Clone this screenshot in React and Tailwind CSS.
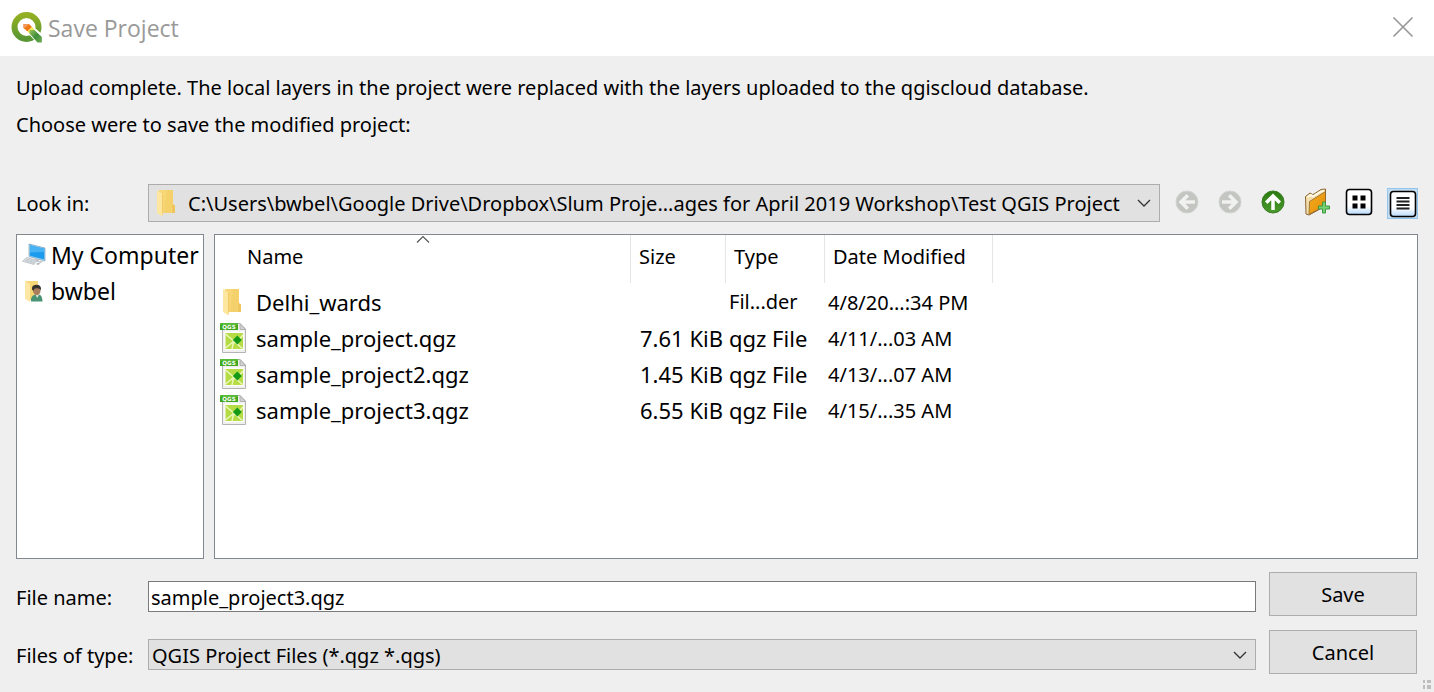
import React, { useState } from "react";

function QgisLogo() {
  return (
    <svg viewBox="0 0 32 32" className="size-8 shrink-0" aria-hidden="true">
      <defs>
        <linearGradient id="ring" x1="0" y1="0" x2="0" y2="1">
          <stop offset="0" stopColor="#93b023" />
          <stop offset="1" stopColor="#589632" />
        </linearGradient>
        <linearGradient id="tail" x1="0" y1="0" x2="1" y2="1">
          <stop offset="0" stopColor="#9cc45a" />
          <stop offset="0.5" stopColor="#3f8f3c" />
          <stop offset="1" stopColor="#6cab4e" />
        </linearGradient>
      </defs>
      <circle cx="15.5" cy="15" r="12" fill="none" stroke="url(#ring)" strokeWidth="6" />
      <path d="M18 22.5 L24 16 L33 24 V32 H27 Z" fill="#fff" />
      <path d="M12.5 12 H18 L21 15 L16.5 19.5 L12.5 16 Z" fill="#ee7913" />
      <path d="M12.5 12 H18 L14.5 15.5 L12.5 16 Z" fill="#f29a5c" />
      <path d="M16.5 19.5 L21 15 L23.5 17.5 L18.5 21.5 Z" fill="#f6e64c" />
      <path d="M18.5 21.5 V18 H23.5 L30.8 25 V30.5 H26.5 Z" fill="url(#tail)" />
    </svg>
  );
}

function FolderIcon({ className }) {
  return (
    <svg viewBox="0 0 22 28" className={className} aria-hidden="true">
      <path d="M4 1 H18 V16 H20 V24 H5 Z" fill="#f7d675" />
      <path d="M12 1 H18 V16 L16 20 V24 H9 Z" fill="#f3ce68" opacity="0.7" />
      <path d="M17 17 L18.5 15 L20 17 V24 H17 Z" fill="#edc55c" />
      <path d="M2 1 L7.5 5 V27.5 L2 24 Z" fill="#fde6a0" />
      <path d="M7 5 L8 5.5 V24 L7 27 Z" fill="#f2cb66" />
    </svg>
  );
}

function ComputerIcon() {
  return (
    <svg viewBox="0 0 24 24" className="size-6 shrink-0" aria-hidden="true">
      <path d="M7 1 L23 5 V18 L7 13.5 Z" fill="#9fd6f7" stroke="#6b91aa" strokeWidth="0.6" />
      <path d="M8 2.3 L22.2 5.8 V16.6 L8 12.7 Z" fill="#1c9bee" />
      <path d="M8 2.3 L22.2 5.8 V9 L8 9.5 Z" fill="#48b3f4" />
      <path d="M13 15 L17 16 V18 L22 17.5 L19 20 L13.5 18.5 Z" fill="#c2c8ce" />
      <path d="M4.5 14.5 L15.5 17.3 L12 21.5 L0.5 18.2 Z" fill="#dfe3e6" stroke="#a3abb2" strokeWidth="0.6" />
      <path d="M4 16 L13.5 18.5 M2.7 17.3 L12.5 20 M7 15.5 L4.5 19 M10 16.4 L8 20 M13 17 L10.5 20.7" stroke="#aeb6bd" strokeWidth="0.5" />
      <path d="M15.5 20 L18.5 20.6 L16.5 21.8 L14 21.3 Z" fill="#a3abb2" />
    </svg>
  );
}

function UserFolderIcon() {
  return (
    <svg viewBox="0 0 24 24" className="size-6 shrink-0" aria-hidden="true">
      <path d="M4 2 H16 V21 H5 Z" fill="#f7d675" />
      <path d="M3 2 L8 5 V23 L3 20 Z" fill="#fde7a4" />
      <path d="M9 22.5 Q8.5 16.5 13.5 15.5 H17 Q20.5 16.5 20.5 22.5 Z" fill="#4a9274" />
      <path d="M13.5 15.5 L15.2 19 L17 15.5 Z" fill="#e7ece8" />
      <ellipse cx="14.8" cy="11.6" rx="3.8" ry="4.6" fill="#a87d5c" />
      <path d="M10 10.5 Q9.5 6 14 5.7 Q19.5 5.5 19 11 Q17.5 8.8 14 9.2 Q11.5 9.5 11.3 12 Z" fill="#35312e" />
    </svg>
  );
}

function QgsFileIcon() {
  return (
    <svg viewBox="0 0 28 34" className="h-[34px] w-7 shrink-0" aria-hidden="true">
      <path d="M2.5 2.5 H20 L25.5 8 V31.5 H2.5 Z" fill="#f0f0f0" stroke="#b4b4b4" />
      <path d="M20 2.5 V8.5 H25.5 Z" fill="#d0d0d0" stroke="#a8a8a8" strokeWidth="0.8" />
      <rect x="4.5" y="10.5" width="19" height="18.5" fill="#fff" />
      <rect x="5.5" y="12" width="17.5" height="16" fill="#b5dc45" />
      <path d="M5.5 13 L22.5 27.5 M5.5 27 L13 21 L16 22 L23 14 M12 28 L13.5 21" stroke="#eef8bd" strokeWidth="1.4" fill="none" />
      <path d="M17.3 14.5 L21.8 19 L17.3 23.5 L12.8 19 Z" fill="#149a16" />
      <rect x="0" y="2" width="18" height="7" fill="#3ea71c" />
      <rect x="0" y="2" width="18" height="2" fill="#57ba37" />
      <text x="9" y="7.8" textAnchor="middle" fontFamily="DejaVu Sans" fontWeight="bold" fontSize="5.6" fill="#fff">
        QGS
      </text>
    </svg>
  );
}

function ArrowIcon({ turn, active }) {
  return (
    <svg viewBox="0 0 24 24" className="size-6" aria-hidden="true">
      <defs>
        <linearGradient id="go" x1="0" y1="0" x2="0" y2="1">
          <stop offset="0" stopColor="#2b7a10" />
          <stop offset="1" stopColor="#4a9a2b" />
        </linearGradient>
      </defs>
      <circle cx="12" cy="12" r="11" fill={active ? "url(#go)" : "#c3c6c0"} stroke={active ? "#3b7d25" : "#d3d4d1"} />
      <g transform={`rotate(${turn} 12 12)`}>
        <path d="M12 20 V7 M5.2 12.8 L12 6 L18.8 12.8" fill="none" stroke={active ? "#fff" : "#f1f1f0"} strokeWidth="3.5" />
      </g>
    </svg>
  );
}

function NewFolderIcon() {
  return (
    <svg viewBox="0 0 26 28" className="h-7 w-[26px]" aria-hidden="true">
      <defs>
        <linearGradient id="amber" x1="0" y1="0" x2="1" y2="1">
          <stop offset="0" stopColor="#f7ae22" />
          <stop offset="1" stopColor="#e08c06" />
        </linearGradient>
      </defs>
      <path d="M2 26 L1.5 8.5 L6 5 L8.5 6.5 L10 6 L17 1.5 L21.5 1 V18 L5 27 Z" fill="#f4dfac" stroke="#8a6330" strokeWidth="1" strokeLinejoin="round" />
      <path d="M3.5 9 L7 7 L9 8.5 L16 4 L20 2.5" stroke="#fffbe9" strokeWidth="1.6" fill="none" />
      <path d="M5.5 13.5 L21.5 3.5 V17.5 L5 26.5 Z" fill="url(#amber)" stroke="#8a6330" strokeWidth="0.8" strokeLinejoin="round" />
      <path d="M18.5 14 H21.5 V18 H25.5 V21 H21.5 V25 H18.5 V21 H14.5 V18 H18.5 Z" fill="#73cf72" stroke="#3f9741" strokeWidth="1" />
    </svg>
  );
}

function ViewIcon({ kind }) {
  return (
    <svg viewBox="0 0 28 28" className="size-7" aria-hidden="true">
      <defs>
        <linearGradient id="face" x1="0" y1="0" x2="0" y2="1">
          <stop offset="0.65" stopColor="#fff" />
          <stop offset="1" stopColor="#b9dafb" />
        </linearGradient>
      </defs>
      <rect x="1.5" y="1.5" width="25" height="25" rx="3" fill="url(#face)" stroke="#000" strokeWidth="1.6" />
      {kind === "grid" ? (
        <path d="M7.5 7.5 h5 v5 h-5 Z M15.5 7.5 h5 v5 h-5 Z M7.5 15.5 h5 v5 h-5 Z M15.5 15.5 h5 v5 h-5 Z" fill="#000" />
      ) : (
        <path d="M7.5 8 h13 M7.5 11.5 h13 M7.5 15 h13 M7.5 18.5 h13" stroke="#222" strokeWidth="1.9" />
      )}
    </svg>
  );
}

function Chevron() {
  return (
    <svg viewBox="0 0 14 8" className="pointer-events-none absolute right-[9px] top-1/2 h-2 w-3.5 -translate-y-1/2" aria-hidden="true">
      <path d="M1 1 L7 7 L13 1" fill="none" stroke="#333" strokeWidth="1.3" />
    </svg>
  );
}

const files = [
  { name: "Delhi_wards", size: "", type: "Fil...der", date: "4/8/20...:34 PM", folder: true },
  { name: "sample_project.qgz", size: "7.61 KiB", type: "qgz File", date: "4/11/...03 AM" },
  { name: "sample_project2.qgz", size: "1.45 KiB", type: "qgz File", date: "4/13/...07 AM" },
  { name: "sample_project3.qgz", size: "6.55 KiB", type: "qgz File", date: "4/15/...35 AM" },
];

export default function App() {
  const [name, setName] = useState("sample_project3.qgz");
  const [view, setView] = useState("list");
  const pushButton = "ml-[13px] mr-px h-11 w-[148px] shrink-0 border border-[#adadad] bg-[#e1e1e1] pt-0.5";
  const cell = "overflow-hidden whitespace-nowrap p-0";
  const head = "whitespace-nowrap border-r border-[#e5e5e5] pb-1 pl-2 text-left font-normal";

  return (
    <div className="relative flex min-h-screen flex-col bg-[#efefef] font-['Noto_Sans',sans-serif] text-[20px] leading-7 text-black">
      <header className="flex h-14 items-center justify-between bg-white pl-[11px] pr-[19px]">
        <div className="flex items-center gap-[5px]">
          <QgisLogo />
          <h1 className="font-['Open_Sans',sans-serif] text-[23px] text-[#999]">Save Project</h1>
        </div>
        <button type="button" aria-label="Close" className="mb-0.5 flex size-6 items-center justify-center">
          <svg viewBox="0 0 22 22" className="size-[22px]" aria-hidden="true">
            <path d="M1.5 1.5 L20.5 20.5 M20.5 1.5 L1.5 20.5" stroke="#999" strokeWidth="1.7" />
          </svg>
        </button>
      </header>

      <main className="flex flex-1 flex-col px-4 pb-[18px] pt-[18px]">
        <p>Upload complete. The local layers in the project were replaced with the layers uploaded to the qgiscloud database.</p>
        <p className="mt-[9px]">Choose were to save the modified project:</p>

        <div className="mt-[45px] flex items-center">
          <label htmlFor="look-in" className="w-[132px] shrink-0 pt-0.5">Look in:</label>
          <div className="relative min-w-0 flex-1">
            <FolderIcon className="pointer-events-none absolute left-[7px] top-[5px] h-7 w-[22px]" />
            <select id="look-in" className="h-[38px] w-full appearance-none truncate border border-[#adadad] bg-[#e1e1e1] pl-[39px] pr-7 pt-0.5">
              <option>{"C:\\Users\\bwbel\\Google Drive\\Dropbox\\Slum Proje...ages for April 2019 Workshop\\Test QGIS Project"}</option>
            </select>
            <Chevron />
          </div>
          <div className="ml-[15px] flex shrink-0 items-center gap-[19px] pb-0.5">
            <button type="button" aria-label="Back" disabled><ArrowIcon turn={-90} /></button>
            <button type="button" aria-label="Forward" disabled><ArrowIcon turn={90} /></button>
            <button type="button" aria-label="Parent folder"><ArrowIcon turn={0} active /></button>
            <button type="button" aria-label="New folder"><NewFolderIcon /></button>
          </div>
          <div className="ml-[15px] flex shrink-0 items-center gap-[14px]">
            <button type="button" aria-label="Icon view" onClick={() => setView("grid")} className="pb-0.5"><ViewIcon kind="grid" /></button>
            <button
              type="button"
              aria-label="Detail view"
              aria-pressed={view === "list"}
              onClick={() => setView("list")}
              className="flex size-[31px] items-end justify-end border border-[#92c6ef] bg-[#c5dcee]"
            >
              <ViewIcon kind="list" />
            </button>
          </div>
        </div>

        <div className="mt-3 flex min-h-[325px] flex-1 gap-[10px]">
          <nav className="w-[188px] shrink-0 overflow-hidden border border-[#828790] bg-white pl-[5px] pt-0.5 text-[23px]">
            <ul>
              <li className="flex h-9 items-center gap-[5px] whitespace-nowrap"><ComputerIcon />My Computer</li>
              <li className="flex h-9 items-center gap-[5px] whitespace-nowrap"><UserFolderIcon />bwbel</li>
            </ul>
          </nav>
          <div className="min-w-0 flex-1 overflow-hidden border border-[#828790] bg-white">
            <table className="w-full table-fixed border-separate border-spacing-0">
              <colgroup>
                <col className="w-[416px]" />
                <col className="w-[95px]" />
                <col className="w-[99px]" />
                <col className="w-[168px]" />
                <col />
              </colgroup>
              <thead>
                <tr className="h-12">
                  <th scope="col" className="relative border-r border-[#e5e5e5] pb-1 pl-8 text-left font-normal">
                    <svg viewBox="0 0 14 8" className="absolute left-1/2 top-0 h-2 w-3.5 -translate-x-1/2" aria-hidden="true">
                      <path d="M1 7.5 L7 1.5 L13 7.5" fill="none" stroke="#555" strokeWidth="1.2" />
                    </svg>
                    Name
                  </th>
                  <th scope="col" className={head}>Size</th>
                  <th scope="col" className={head}>Type</th>
                  <th scope="col" className={head}>Date Modified</th>
                  <td />
                </tr>
              </thead>
              <tbody className="before:block before:h-px">
                {files.map((f) => (
                  <tr key={f.name} className="h-9">
                    <td className={cell + " pl-[5px]"}>
                      <div className="flex items-center gap-2 text-[22px]">
                        {f.folder ? <FolderIcon className="mr-1 h-7 w-6 shrink-0" /> : <QgsFileIcon />}
                        {f.name}
                      </div>
                    </td>
                    <td className={cell + " pr-[3px] text-right text-[22px]"}>{f.size}</td>
                    <td className={cell + " pl-[3px]" + (f.folder ? "" : " text-[22px]")}>{f.type}</td>
                    <td className={cell + " pl-[3px] pt-0.5"}>{f.date}</td>
                    <td />
                  </tr>
                ))}
              </tbody>
            </table>
          </div>
        </div>

        <div className="mt-[13px] flex items-center">
          <label htmlFor="file-name" className="w-[132px] shrink-0 pt-2">File name:</label>
          <input
            id="file-name"
            type="text"
            value={name}
            onChange={(e) => setName(e.target.value)}
            className="mt-[5px] h-[31px] min-w-0 flex-1 border border-[#7a7a7a] bg-white px-0.5 pt-0.5"
          />
          <button type="button" className={pushButton}>Save</button>
        </div>
        <div className="mt-[14px] flex items-center">
          <label htmlFor="file-type" className="w-[132px] shrink-0 pt-2">Files of type:</label>
          <div className="relative mt-[5px] flex min-w-0 flex-1">
            <select id="file-type" className="h-[31px] w-full appearance-none border border-[#adadad] bg-[#e1e1e1] pl-[3px] pr-7 pt-0.5">
              <option>QGIS Project Files (*.qgz *.qgs)</option>
            </select>
            <Chevron />
          </div>
          <button type="button" className={pushButton}>Cancel</button>
        </div>
      </main>
      <svg viewBox="0 0 8 9" className="absolute bottom-[3px] right-[3px] h-[9px] w-2" aria-hidden="true">
        <path d="M0 0 h2 v3 h-2 Z M4 0 h4 v3 h-4 Z M0 5 h2 v4 h-2 Z M4 5 h4 v4 h-4 Z" fill="#bdbdbd" />
      </svg>
    </div>
  );
}
